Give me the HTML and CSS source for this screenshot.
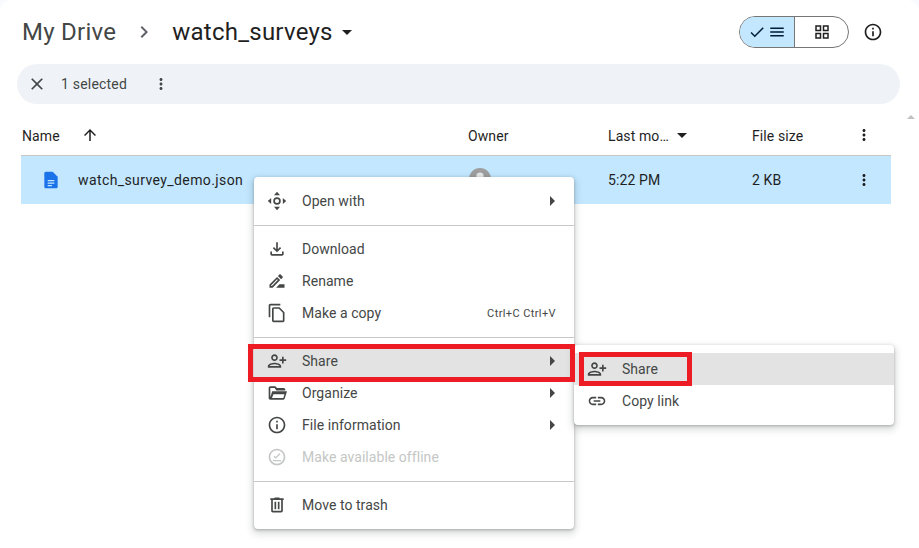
FILE: index.html
```html
<!DOCTYPE html>
<html lang="en">
<head>
  <meta charset="UTF-8" />
  <title>watch_surveys - Google Drive</title>
  <link rel="stylesheet" href="styles.css">
</head>
<body>
  <div class="page">
    <header class="topbar">
      <div class="crumbs">
        <span class="crumb">My Drive</span>
        <svg class="crumb-sep" viewBox="0 0 24 24"><path d="M10 6L8.59 7.41 13.17 12l-4.58 4.59L10 18l6-6z"/></svg>
        <span class="crumb current">watch_surveys</span>
        <svg class="crumb-drop" viewBox="0 0 24 24"><path d="M7 10l5 5 5-5z"/></svg>
      </div>
      <div class="view-toggle">
        <div class="view-btn active">
          <svg class="ico-18" viewBox="0 0 24 24"><path d="M9 16.17L4.83 12l-1.42 1.41L9 19 21 7l-1.41-1.41z"/></svg>
          <svg class="ico-18" viewBox="0 0 24 24"><path d="M3 18h18v-2H3v2zm0-5h18v-2H3v2zm0-7v2h18V6H3z"/></svg>
        </div>
        <div class="view-btn">
          <svg class="ico-18" viewBox="0 0 24 24"><path fill-rule="evenodd" d="M3 3h8v8H3zm2 2v4h4V5zM13 3h8v8h-8zm2 2v4h4V5zM3 13h8v8H3zm2 2v4h4v-4zM13 13h8v8h-8zm2 2v4h4v-4z"/></svg>
        </div>
      </div>
      <svg class="info-btn" viewBox="0 0 24 24"><path d="M11 7h2v2h-2zm0 4h2v6h-2zm1-9C6.48 2 2 6.48 2 12s4.48 10 10 10 10-4.48 10-10S17.52 2 12 2zm0 18c-4.41 0-8-3.59-8-8s3.59-8 8-8 8 3.59 8 8-3.59 8-8 8z"/></svg>
    </header>

    <div class="select-bar">
      <svg class="ico-20 bar-close" viewBox="0 0 24 24"><path d="M19 6.41L17.59 5 12 10.59 6.41 5 5 6.41 10.59 12 5 17.59 6.41 19 12 13.41 17.59 19 19 17.59 13.41 12z"/></svg>
      <span class="bar-count">1 selected</span>
      <svg class="ico-18 bar-more" viewBox="0 0 24 24"><path d="M12 8c1.1 0 2-.9 2-2s-.9-2-2-2-2 .9-2 2 .9 2 2 2zm0 2c-1.1 0-2 .9-2 2s.9 2 2 2 2-.9 2-2-.9-2-2-2zm0 6c-1.1 0-2 .9-2 2s.9 2 2 2 2-.9 2-2-.9-2-2-2z"/></svg>
    </div>

    <div class="file-table">
      <div class="file-row head">
        <div class="cell name-cell">
          <span class="head-text">Name</span>
          <svg class="ico-18 sort-arrow" viewBox="0 0 24 24"><path d="M4 12l1.41 1.41L11 7.83V20h2V7.83l5.58 5.59L20 12l-8-8-8 8z"/></svg>
        </div>
        <div class="cell"><span class="head-text">Owner</span></div>
        <div class="cell"><span class="head-text">Last mo…</span><svg class="ico-24 mod-drop" viewBox="0 0 24 24"><path d="M7 10l5 5 5-5z"/></svg></div>
        <div class="cell"><span class="head-text">File size</span></div>
        <svg class="ico-18 row-more" viewBox="0 0 24 24"><path d="M12 8c1.1 0 2-.9 2-2s-.9-2-2-2-2 .9-2 2 .9 2 2 2zm0 2c-1.1 0-2 .9-2 2s.9 2 2 2 2-.9 2-2-.9-2-2-2zm0 6c-1.1 0-2 .9-2 2s.9 2 2 2 2-.9 2-2-.9-2-2-2z"/></svg>
      </div>
      <div class="file-row selected">
        <div class="cell name-cell">
          <svg class="ico-20 doc-icon" viewBox="0 0 24 24"><path fill="#1a73e8" d="M14 2H6c-1.1 0-2 .9-2 2v16c0 1.1.9 2 2 2h12c1.1 0 2-.9 2-2V8l-6-6z"/><path fill="#c2e7ff" d="M8 12h8v1.6H8zM8 15h8v1.6H8zM8 18h5v1.4H8z"/></svg>
          <span class="file-name">watch_survey_demo.json</span>
        </div>
        <div class="cell">
          <svg class="avatar" viewBox="0 0 22 22"><circle cx="11" cy="11" r="11" fill="#9e9e9e"/><circle cx="11" cy="8" r="3.6" fill="#e8e8e8"/><path fill="#e8e8e8" d="M4 18c1-4 4-5 7-5s6 1 7 5z"/></svg>
        </div>
        <div class="cell">5:22 PM</div>
        <div class="cell">2 KB</div>
        <svg class="ico-18 row-more" viewBox="0 0 24 24"><path d="M12 8c1.1 0 2-.9 2-2s-.9-2-2-2-2 .9-2 2 .9 2 2 2zm0 2c-1.1 0-2 .9-2 2s.9 2 2 2 2-.9 2-2-.9-2-2-2zm0 6c-1.1 0-2 .9-2 2s.9 2 2 2 2-.9 2-2-.9-2-2-2z"/></svg>
      </div>
    </div>

    <div class="scroll-up"></div>

    <div class="menu context-menu">
      <div class="menu-item">
        <svg class="menu-ico" viewBox="0 0 24 24"><path d="M12 1l3.600 4h-7.200zM12 23l-3.600-4h7.200zM1 12l4-3.600v7.200zM23 12l-4 3.600V8.400z"/><path fill-rule="evenodd" d="M12 7.500a4.500 4.500 0 1 1 0 9 4.500 4.500 0 0 1 0-9zm0 2a2.500 2.500 0 1 0 0 5 2.500 2.500 0 0 0 0-5z"/></svg>
        <span class="menu-label">Open with</span>
        <svg class="menu-arrow" viewBox="0 0 8 12"><path d="M2 1l5 5-5 5z"/></svg>
      </div>
      <div class="menu-line"></div>
      <div class="menu-item">
        <svg class="menu-ico" viewBox="0 0 24 24"><path d="M18 15v3H6v-3H4v3c0 1.1.9 2 2 2h12c1.1 0 2-.9 2-2v-3h-2zm-1-4l-1.41-1.41L13 12.17V4h-2v8.17L8.41 9.59 7 11l5 5 5-5z"/></svg>
        <span class="menu-label">Download</span>
      </div>
      <div class="menu-item">
        <svg class="menu-ico" viewBox="0 0 24 24"><path d="M15 16l-4 4h10v-4zM12.06 7.19L3 16.25V20h3.75l9.06-9.06-3.75-3.75zM5.92 18H5v-.92l7.06-7.06.92.92L5.92 18zM18.71 8.04c.39-.39.39-1.02 0-1.41l-2.34-2.34c-.39-.39-1.02-.39-1.41 0l-1.83 1.83 3.75 3.75 1.83-1.83z"/></svg>
        <span class="menu-label">Rename</span>
      </div>
      <div class="menu-item">
        <svg class="menu-ico" viewBox="0 0 24 24"><path d="M16 1H4c-1.1 0-2 .9-2 2v14h2V3h12V1zm-1 4l6 6v10c0 1.1-.9 2-2 2H8c-1.1 0-2-.9-2-2V7c0-1.1.9-2 2-2h7zm-.83 2H8v14h11v-9.17L14.17 7z"/></svg>
        <span class="menu-label">Make a copy</span>
        <span class="menu-keys">Ctrl+C Ctrl+V</span>
      </div>
      <div class="menu-line"></div>
      <div class="menu-item hover">
        <svg class="menu-ico" viewBox="0 0 24 24"><path transform="translate(24 0) scale(-1 1)" d="M15 12c2.21 0 4-1.79 4-4s-1.79-4-4-4-4 1.79-4 4 1.79 4 4 4zm0-6c1.1 0 2 .9 2 2s-.9 2-2 2-2-.9-2-2 .9-2 2-2zm0 8c-2.67 0-8 1.34-8 4v2h16v-2c0-2.66-5.33-4-8-4zm-6 4c.22-.72 3.31-2 6-2 2.7 0 5.8 1.29 6 2H9zm-3-3v-3h3v-2H6V7H4v3H1v2h3v3h2z"/></svg>
        <span class="menu-label">Share</span>
        <svg class="menu-arrow" viewBox="0 0 8 12"><path d="M2 1l5 5-5 5z"/></svg>
      </div>
      <div class="menu-item">
        <svg class="menu-ico" viewBox="0 0 24 24"><path d="M4 4h6l2 2h8c1.1 0 2 .9 2 2v1H11.2l-2-3H4v11l2.2-7H24l-2.8 9c-.2.6-.7 1-1.3 1H4c-1.1 0-2-.9-2-2V6c0-1.1.9-2 2-2zm3.700 9.500L6 18h13.600l1.400-4.500z"/></svg>
        <span class="menu-label">Organize</span>
        <svg class="menu-arrow" viewBox="0 0 8 12"><path d="M2 1l5 5-5 5z"/></svg>
      </div>
      <div class="menu-item">
        <svg class="menu-ico" viewBox="0 0 24 24"><path d="M11 7h2v2h-2zm0 4h2v6h-2zm1-9C6.48 2 2 6.48 2 12s4.48 10 10 10 10-4.48 10-10S17.52 2 12 2zm0 18c-4.41 0-8-3.59-8-8s3.59-8 8-8 8 3.59 8 8-3.59 8-8 8z"/></svg>
        <span class="menu-label">File information</span>
        <svg class="menu-arrow" viewBox="0 0 8 12"><path d="M2 1l5 5-5 5z"/></svg>
      </div>
      <div class="menu-item disabled">
        <svg class="menu-ico" viewBox="0 0 24 24"><path d="M12 2C6.48 2 2 6.48 2 12s4.48 10 10 10 10-4.48 10-10S17.52 2 12 2zm0 18c-4.41 0-8-3.59-8-8s3.59-8 8-8 8 3.59 8 8-3.59 8-8 8z"/><path d="M7 15.500h10V17H7zM10.500 14.200L7.800 11.500l1.100-1.100 1.600 1.600 4.700-4.700 1.100 1.100z"/></svg>
        <span class="menu-label">Make available offline</span>
      </div>
      <div class="menu-line"></div>
      <div class="menu-item">
        <svg class="menu-ico" viewBox="0 0 24 24"><path d="M15 4V3H9v1H4v2h1v13c0 1.1.9 2 2 2h10c1.100 0 2-.9 2-2V6h1V4h-5zm2 15H7V6h10v13zM9 8h2v9H9zm4 0h2v9h-2z"/></svg>
        <span class="menu-label">Move to trash</span>
      </div>
    </div>

    <div class="menu share-menu">
      <div class="menu-item hover">
        <svg class="menu-ico" viewBox="0 0 24 24"><path transform="translate(24 0) scale(-1 1)" d="M15 12c2.21 0 4-1.79 4-4s-1.79-4-4-4-4 1.79-4 4 1.79 4 4 4zm0-6c1.1 0 2 .9 2 2s-.9 2-2 2-2-.9-2-2 .9-2 2-2zm0 8c-2.67 0-8 1.34-8 4v2h16v-2c0-2.66-5.33-4-8-4zm-6 4c.22-.72 3.31-2 6-2 2.7 0 5.8 1.29 6 2H9zm-3-3v-3h3v-2H6V7H4v3H1v2h3v3h2z"/></svg>
        <span class="menu-label">Share</span>
      </div>
      <div class="menu-item">
        <svg class="menu-ico" viewBox="0 0 24 24"><path d="M3.900 12c0-1.710 1.390-3.100 3.100-3.100h4V7H7c-2.760 0-5 2.240-5 5s2.240 5 5 5h4v-1.900H7c-1.710 0-3.100-1.390-3.100-3.100zM8 13h8v-2H8v2zm9-6h-4v1.900h4c1.710 0 3.100 1.390 3.100 3.100s-1.390 3.100-3.100 3.100h-4V17h4c2.760 0 5-2.240 5-5s-2.240-5-5-5z"/></svg>
        <span class="menu-label">Copy link</span>
      </div>
    </div>

    <div class="mark mark-main"></div>
    <div class="mark mark-sub"></div>
  </div>
</body>
</html>
```

FILE: styles.css
```css
* {
  box-sizing: border-box;
}
html, body {
  margin: 0;
  height: 100%;
}
body {
  background: #f8fafd;
  color: #1f1f1f;
  font-family: Roboto, "Liberation Sans", sans-serif;
  font-size: 14px;
  overflow: hidden;
}
svg {
  display: block;
  fill: currentColor;
  flex: none;
}
.ico-18 { width: 18px; height: 18px; }
.ico-20 { width: 20px; height: 20px; }
.ico-24 { width: 24px; height: 24px; }

.page {
  position: relative;
  height: 100%;
  padding: 16px 19px 0 17px;
  background: #ffffff;
  border-radius: 12px 12px 0 0;
}

.topbar {
  display: flex;
  align-items: center;
  height: 32px;
  padding-left: 5px;
}
.crumbs {
  display: flex;
  align-items: center;
  flex: 1;
}
.crumb {
  font-size: 24px;
  letter-spacing: 0.25px;
  color: #444746;
}
.crumb.current {
  color: #1f1f1f;
}
.crumb-sep {
  width: 24px;
  height: 24px;
  margin: 0 16px;
  color: #5f6368;
}
.crumb-drop {
  width: 24px;
  height: 24px;
  margin-left: 2px;
}
.view-toggle {
  display: flex;
  width: 110px;
  height: 32px;
  border: 1px solid #747775;
  border-radius: 16px;
  overflow: hidden;
}
.view-btn {
  display: flex;
  align-items: center;
  justify-content: center;
  flex: 1;
}
.view-btn.active {
  flex: none;
  width: 55px;
  gap: 2px;
  background: #c2e7ff;
  border-right: 1px solid #747775;
  color: #001d35;
}
.info-btn {
  width: 20px;
  height: 20px;
  margin: 0 17px 0 14px;
}

.select-bar {
  display: flex;
  align-items: center;
  height: 40px;
  margin-top: 16px;
  padding-left: 10px;
  background: #eff3f8;
  border-radius: 20px;
  color: #444746;
  letter-spacing: 0.2px;
}
.bar-count {
  margin-left: 14px;
}
.bar-more {
  margin-left: 25px;
}

.file-table {
  margin: 0 9px 0 4px;
  letter-spacing: 0.1px;
}
.file-row {
  display: grid;
  grid-template-columns: 447px 140px 144px 1fr 18px;
  align-items: center;
  padding-right: 18px;
}
.file-row.head {
  height: 52px;
  padding-top: 11px;
  border-bottom: 1px solid #c7c7c7;
}
.file-row.selected {
  height: 48px;
  background: #c2e7ff;
}
.head .cell {
  display: flex;
  align-items: center;
}
.head-text {
  padding-top: 2px;
}
.file-row.head .name-cell {
  padding-left: 1px;
}
.name-cell {
  display: flex;
  align-items: center;
}
.file-name {
  letter-spacing: 0.4px;
}
.sort-arrow {
  margin-left: 21px;
}
.mod-drop {
  margin-left: 1px;
}
.doc-icon {
  margin: 0 17px 0 20px;
}
.avatar {
  width: 22px;
  height: 22px;
  margin: -3px 0 0 1px;
}

.scroll-up {
  position: absolute;
  top: 115px;
  left: 907px;
  border-left: 4px solid transparent;
  border-right: 4px solid transparent;
  border-bottom: 4px solid #c1c1c1;
}

.menu {
  position: absolute;
  width: 320px;
  padding: 8px 0;
  background: #ffffff;
  border-radius: 4px;
  box-shadow: 0 3px 7px 2px rgba(60, 64, 67, 0.18), 0 1px 3px rgba(60, 64, 67, 0.35);
  color: #444746;
  letter-spacing: 0.05px;
}
.context-menu {
  left: 254px;
  top: 177px;
}
.share-menu {
  left: 574px;
  top: 345px;
}
.menu-item {
  display: flex;
  align-items: center;
  height: 32px;
  padding: 0 18px 0 13px;
}
.menu-item.hover {
  background: #e3e3e3;
}
.menu-item.disabled {
  color: #c4c7c5;
}
.menu-ico {
  width: 20px;
  height: 20px;
  margin-right: 15px;
}
.menu-label {
  flex: 1;
}
.menu-arrow {
  width: 8px;
  height: 12px;
}
.menu-keys {
  font-size: 11px;
  letter-spacing: 0.4px;
}
.menu-line {
  height: 1px;
  margin: 8px 0 7px;
  background: #c7c7c7;
}

.mark {
  position: absolute;
  border: 5px solid #ed1c24;
}
.mark-main {
  left: 248px;
  top: 344px;
  width: 327px;
  height: 38px;
}
.mark-sub {
  left: 579px;
  top: 352px;
  width: 113px;
  height: 34px;
}
```
